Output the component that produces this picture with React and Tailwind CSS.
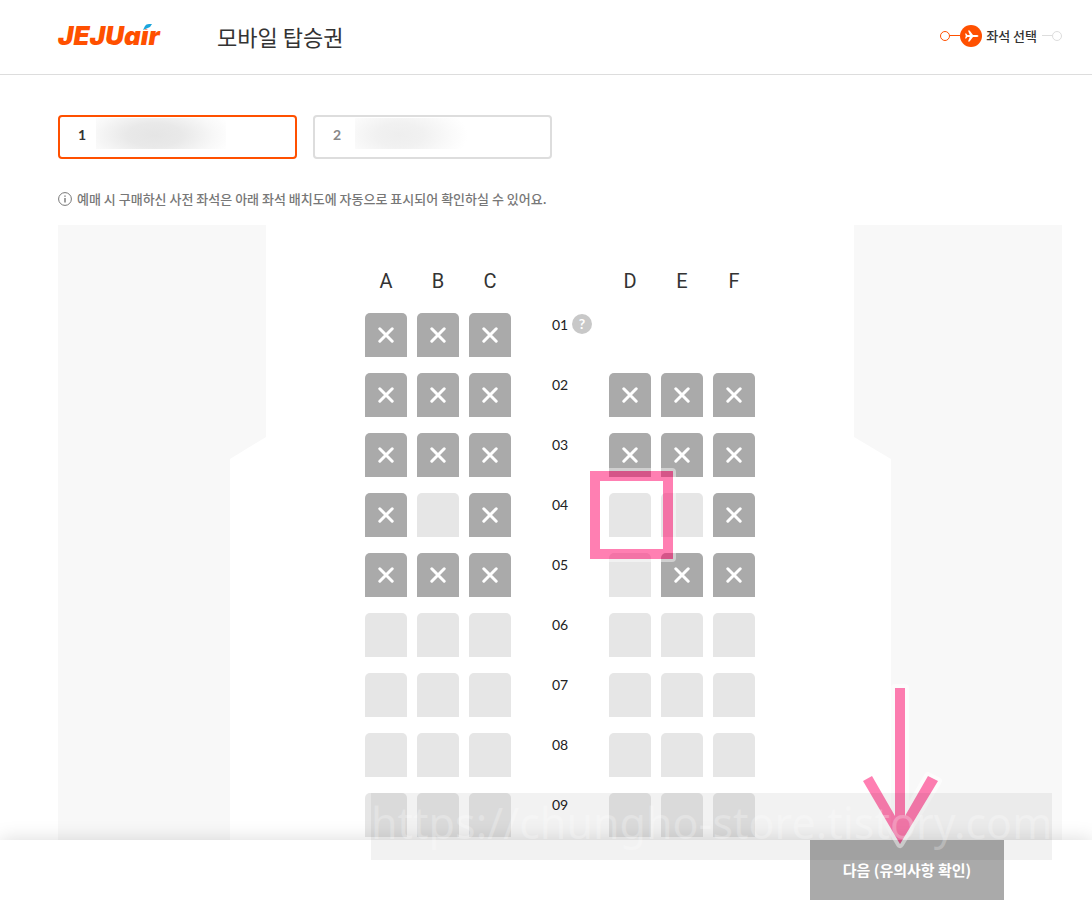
import { useState } from "react";

const LEFT = ["A", "B", "C"];
const RIGHT = ["D", "E", "F"];

// x = taken, o = open, - = no seat
const ROWS = [
  { no: "01", seats: "xxx---" },
  { no: "02", seats: "xxxxxx" },
  { no: "03", seats: "xxxxxx" },
  { no: "04", seats: "xoxoox" },
  { no: "05", seats: "xxxoxx" },
  { no: "06", seats: "oooooo" },
  { no: "07", seats: "oooooo" },
  { no: "08", seats: "oooooo" },
  { no: "09", seats: "oooooo" },
];

function Logo() {
  return (
    <a href="#" aria-label="JEJUair" className="relative w-[102px] text-[26px] leading-[26px] font-black italic text-[#ff5000] font-[Inter,sans-serif]">
      JEJUair
      <svg className="absolute left-[83px] top-0 h-2 w-4" viewBox="0 0 16 8">
        <path d="M2 0H16V6H2Z" fill="#fff" />
        <path d="M2 7L4 3Q5 1 8 1H11L9 4Q7 5 2 7Z" fill="#1ba5dc" />
      </svg>
    </a>
  );
}

function Steps() {
  return (
    <div className="flex items-center">
      <span className="h-[10px] w-[10px] rounded-full border border-[#ff5000]" />
      <span className="h-px w-[10px] bg-[#ff5000]" />
      <svg className="h-[22px] w-[22px]" viewBox="0 0 22 22">
        <circle cx="11" cy="11" r="11" fill="#ff5000" />
        <path
          d="M18.5 11Q18.5 12 16.5 12H13L9.6 16.5H8L9.8 12H7.4L6.2 13.6H5L5.8 11L5 8.4H6.2L7.4 10H9.8L8 5.5H9.6L13 10H16.5Q18.5 10 18.5 11Z"
          fill="#fff"
        />
      </svg>
      <strong className="ml-1 text-[13px] leading-5 font-medium text-[#333]">좌석 선택</strong>
      <span className="ml-[5px] h-px w-[10px] bg-[#ddd]" />
      <span className="h-[10px] w-[10px] rounded-full border border-[#ddd]" />
    </div>
  );
}

function Passenger({ no, active, onClick }) {
  return (
    <button
      type="button"
      onClick={onClick}
      className={
        active
          ? "flex h-11 w-[239px] items-start rounded border-2 border-[#ff5000] pl-[18px] pt-px text-[#333]"
          : "flex h-11 w-[239px] items-start rounded border-2 border-[#ddd] pl-[18px] pt-px text-[#888]"
      }
    >
      <span className="w-[18px] text-left text-[14px] leading-[34px] font-bold font-[Lato,sans-serif]">{no}</span>
      <span
        className={
          active
            ? "h-[31px] w-[130px] bg-[radial-gradient(ellipse_80px_34px_at_45%_55%,#e5e5e5_0%,#e9e9e9_35%,#f8f8f8_75%,#ffffff_100%)]"
            : "ml-1 h-[31px] w-[112px] bg-[radial-gradient(ellipse_68px_34px_at_40%_55%,#eeeeee_0%,#f1f1f1_35%,#fafafa_75%,#ffffff_100%)]"
        }
      />
    </button>
  );
}

function Seat({ name, state, marked, onPick }) {
  if (state === "-") return <span className="h-11 w-[42px]" />;
  if (state === "x") {
    return (
      <button type="button" disabled aria-label={name} className="flex h-11 w-[42px] items-center justify-center rounded-t-[5px] bg-[#aaa]">
        <svg className="h-4 w-4" viewBox="0 0 16 16">
          <path d="M1.8 1.8L14.2 14.2M14.2 1.8L1.8 14.2" stroke="#fff" strokeWidth="3" strokeLinecap="round" />
        </svg>
      </button>
    );
  }
  return (
    <button type="button" aria-label={name} onClick={onPick} className="relative h-11 w-[42px] rounded-t-[5px] bg-[#e6e6e6]">
      {marked && (
        <span className="absolute -left-[22px] -top-[25px] z-10 flex h-[94px] w-[89px] rounded border-3 border-white/45">
          <span className="flex-1 border-10 border-[#ff0066]/50" />
        </span>
      )}
    </button>
  );
}

function SeatRow({ row, picked, setPicked }) {
  const group = (letters, from) => (
    <div className="flex gap-[10px]">
      {letters.map((l, i) => (
        <Seat
          key={l}
          name={row.no + l}
          state={row.seats[from + i]}
          marked={picked === row.no + l}
          onPick={() => setPicked(row.no + l)}
        />
      ))}
    </div>
  );

  return (
    <div className="flex">
      {group(LEFT, 0)}
      <div className="relative w-[98px] text-center text-[14px] leading-6 text-[#222] font-[Lato,sans-serif]">
        {row.no}
        {row.no === "01" && (
          <button type="button" aria-label="help" className="absolute left-[61px] top-px h-5 w-5 rounded-full bg-[#c8c8c8] text-[14px] leading-5 font-bold text-white">
            ?
          </button>
        )}
      </div>
      {group(RIGHT, 3)}
    </div>
  );
}

function Letters({ list }) {
  return (
    <div className="flex gap-[10px]">
      {list.map((l) => (
        <span key={l} className="w-[42px] text-center">{l}</span>
      ))}
    </div>
  );
}

const ARROW = "M38 6H48V134L71 94L81 99L43 162L6 99L15 94L38 134Z";

function Arrow() {
  return (
    <svg className="pointer-events-none absolute bottom-[50px] left-[47px] h-[168px] w-[86px]" viewBox="0 0 86 168" fill="none">
      <mask id="halo" maskUnits="userSpaceOnUse" x="0" y="0" width="86" height="168">
        <path d="M0 0H86V168H0Z" fill="#fff" />
        <path d={ARROW} fill="#000" />
      </mask>
      <path d={ARROW} stroke="#fff" strokeOpacity="0.5" strokeWidth="8" strokeLinejoin="round" mask="url(#halo)" />
      <path d={ARROW} fill="#ff0066" fillOpacity="0.5" />
    </svg>
  );
}

export default function App() {
  const [passenger, setPassenger] = useState(1);
  const [picked, setPicked] = useState("04D");

  return (
    <div className="flex min-h-screen flex-col bg-white font-['Noto_Sans_CJK_KR',sans-serif] text-[#333]">
      <header className="flex h-[75px] items-center border-b border-[#ddd] pb-[3px] pl-[58px] pr-[30px]">
        <Logo />
        <h1 className="ml-[57px] text-[22px] leading-8">모바일 탑승권</h1>
        <div className="ml-auto">
          <Steps />
        </div>
      </header>

      <main className="flex flex-1 flex-col pl-[58px] pr-[30px] pt-10">
        <div className="flex gap-4">
          <Passenger no={1} active={passenger === 1} onClick={() => setPassenger(1)} />
          <Passenger no={2} active={passenger === 2} onClick={() => setPassenger(2)} />
        </div>

        <p className="mt-[30px] flex items-center gap-[5px] text-[13px] leading-5 font-medium text-[#777]">
          <svg className="h-[14px] w-[14px]" viewBox="0 0 14 14" fill="none" stroke="#777">
            <circle cx="7" cy="7" r="6.4" />
            <path d="M7 6V10.5M7 3.5V4.8" strokeWidth="1.4" />
          </svg>
          예매 시 구매하신 사전 좌석은 아래 좌석 배치도에 자동으로 표시되어 확인하실 수 있어요.
        </p>

        <section className="mt-4 flex flex-1 justify-between">
          <div className="w-[208px] bg-[#f8f8f8] [clip-path:polygon(0_0,100%_0,100%_212px,172px_234px,172px_100%,0_100%)]" />
          <div className="pt-11">
            <div className="flex justify-between text-[20px] leading-6 font-[Roboto,sans-serif]">
              <Letters list={LEFT} />
              <Letters list={RIGHT} />
            </div>
            <div className="mt-5 flex flex-col gap-4">
              {ROWS.map((row) => (
                <SeatRow key={row.no} row={row} picked={picked} setPicked={setPicked} />
              ))}
            </div>
          </div>
          <div className="w-[208px] bg-[#f8f8f8] [clip-path:polygon(0_0,100%_0,100%_100%,37px_100%,37px_234px,0_212px)]" />
        </section>
      </main>

      <footer className="sticky bottom-0 z-20 flex h-15 justify-end bg-white pr-[88px] shadow-[0_0_20px_rgba(0,0,0,0.15)]">
        <button type="button" className="relative w-[194px] bg-[#aaa] text-[15px] leading-6 font-bold text-white">
          다음 (유의사항 확인)
          <Arrow />
        </button>
        <div className="pointer-events-none absolute bottom-10 right-10 h-[67px] w-[681px] bg-black/5 text-center text-[43px] leading-[60px] whitespace-nowrap text-white/25 font-['Noto_Sans',sans-serif]">
          https://chungho-store.tistory.com
        </div>
      </footer>
    </div>
  );
}
